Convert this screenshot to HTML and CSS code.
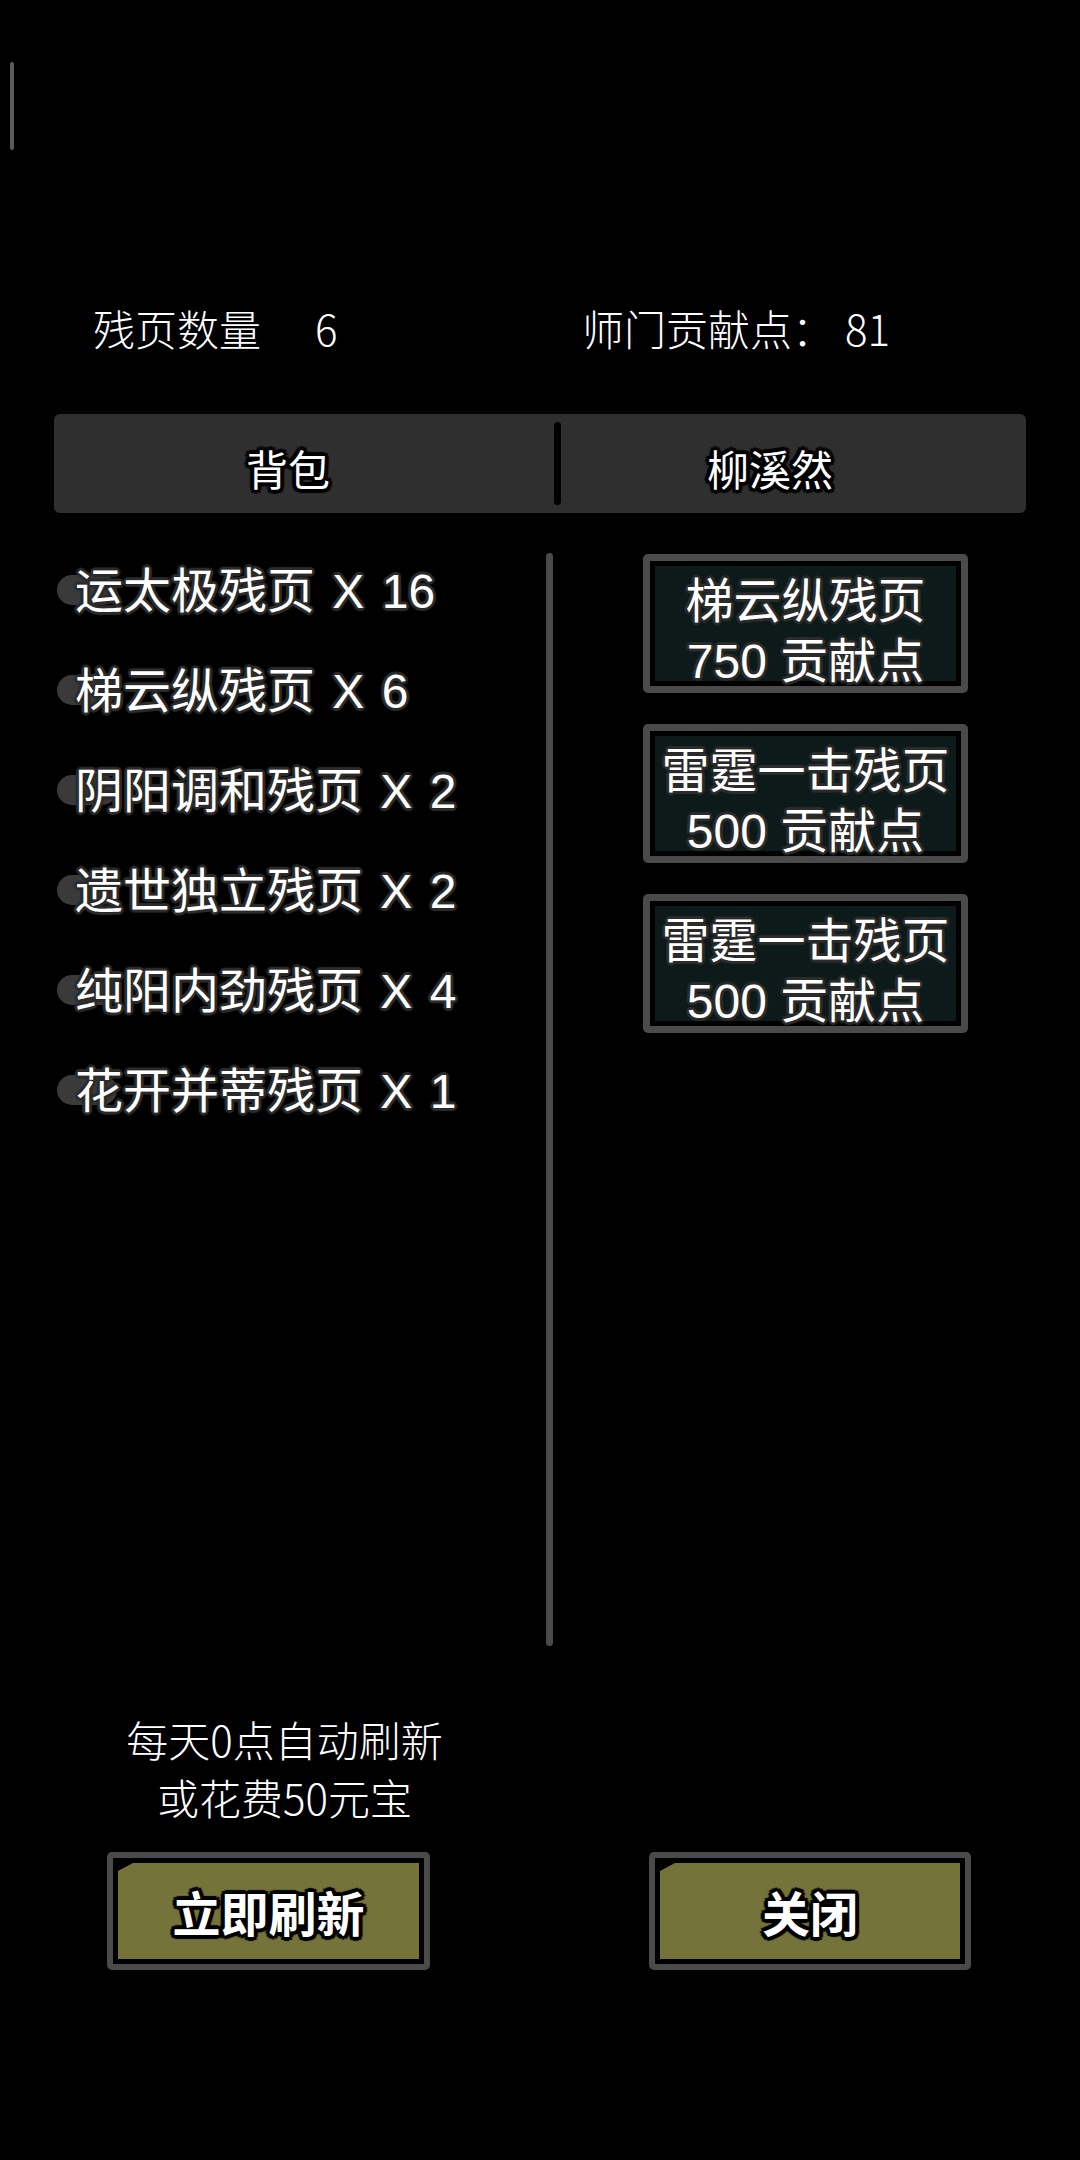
FILE: index.html
```html
<!DOCTYPE html>
<html lang="zh-CN">
<head>
<meta charset="utf-8">
<title>残页兑换</title>
<link rel="stylesheet" href="styles.css">
</head>
<body>
<div class="page">
  <div class="indicator"></div>

  <div class="stats">
    <div class="stat stat-left"><span>残页数量</span><span class="num num-left">6</span></div>
    <div class="stat stat-right"><span>师门贡献点：</span><span class="num num-right">81</span></div>
  </div>

  <div class="tabs">
    <div class="tab tab-left outlined-black">背包</div>
    <div class="tab-divider"></div>
    <div class="tab tab-right outlined-black">柳溪然</div>
  </div>

  <div class="main">
    <div class="bag-list">
      <div class="bag-row"><span class="blob"></span><span class="bag-text outlined-gray">运太极残页 X 16</span></div>
      <div class="bag-row"><span class="blob"></span><span class="bag-text outlined-gray">梯云纵残页 X 6</span></div>
      <div class="bag-row"><span class="blob"></span><span class="bag-text outlined-gray">阴阳调和残页 X 2</span></div>
      <div class="bag-row"><span class="blob"></span><span class="bag-text outlined-gray">遗世独立残页 X 2</span></div>
      <div class="bag-row"><span class="blob"></span><span class="bag-text outlined-gray">纯阳内劲残页 X 4</span></div>
      <div class="bag-row"><span class="blob"></span><span class="bag-text outlined-gray">花开并蒂残页 X 1</span></div>
    </div>
    <div class="scrollbar"></div>
    <div class="shop">
      <div class="card"><div class="card-fill outlined-gray"><div class="card-line">梯云纵残页</div><div class="card-line">750 贡献点</div></div></div>
      <div class="card"><div class="card-fill outlined-gray"><div class="card-line">雷霆一击残页</div><div class="card-line">500 贡献点</div></div></div>
      <div class="card"><div class="card-fill outlined-gray"><div class="card-line">雷霆一击残页</div><div class="card-line">500 贡献点</div></div></div>
    </div>
  </div>

  <div class="refresh-note">
    <div>每天0点自动刷新</div>
    <div>或花费50元宝</div>
  </div>

  <div class="buttons">
    <div class="btn btn-refresh"><div class="btn-fill outlined-black">立即刷新</div></div>
    <div class="btn btn-close"><div class="btn-fill outlined-black">关闭</div></div>
  </div>
</div>
</body>
</html>
```

FILE: styles.css
```css
html, body {
  margin: 0;
  padding: 0;
  background: #000;
}

body {
  width: 1080px;
  height: 2160px;
  overflow: hidden;
  color: #fff;
  font-family: "Noto Sans CJK SC", "Noto Sans", sans-serif;
}

.page {
  display: flex;
  flex-direction: column;
  width: 1080px;
}

.indicator {
  margin-top: 62px;
  margin-left: 10px;
  width: 4px;
  height: 88px;
  border-radius: 2px;
  background: #5a5a5a;
}

.outlined-gray {
  text-shadow:
    3px 0 1px #2c2c2c, -3px 0 1px #2c2c2c, 0 3px 1px #2c2c2c, 0 -3px 1px #2c2c2c,
    2px 2px 1px #2c2c2c, -2px 2px 1px #2c2c2c, 2px -2px 1px #2c2c2c, -2px -2px 1px #2c2c2c;
}

.outlined-black {
  text-shadow:
    4px 0 1px #000, -4px 0 1px #000, 0 4px 1px #000, 0 -4px 1px #000,
    3px 3px 1px #000, -3px 3px 1px #000, 3px -3px 1px #000, -3px -3px 1px #000,
    2px 0 0 #000, -2px 0 0 #000, 0 2px 0 #000, 0 -2px 0 #000;
}

/* stats */
.stats {
  display: flex;
  margin-top: 157px;
  height: 42px;
  font-size: 42px;
  line-height: 42px;
  font-weight: 300;
}

.stat {
  display: flex;
  white-space: nowrap;
}

.stat-left {
  width: 582px;
  padding-left: 93px;
  box-sizing: border-box;
}

.num-left {
  margin-left: 54px;
}

.num-right {
  margin-left: 11px;
}

/* tabs */
.tabs {
  display: flex;
  align-items: center;
  margin-top: 65px;
  margin-left: 54px;
  width: 972px;
  height: 99px;
  border-radius: 6px;
  background: #2f2f2f;
}

.tab {
  font-size: 42px;
  line-height: 99px;
  height: 99px;
  padding-top: 4px;
  box-sizing: border-box;
  text-align: center;
}

.tab-left {
  width: 468px;
}

.tab-divider {
  margin-left: 32px;
  width: 7px;
  height: 83px;
  border-radius: 4px;
  background: #000;
}

.tab-right {
  width: 418px;
}

/* main */
.main {
  display: flex;
  align-items: flex-start;
  margin-top: 24px;
  height: 1109px;
}

.bag-list {
  display: flex;
  flex-direction: column;
  width: 546px;
  padding-top: 5px;
  padding-left: 57px;
  box-sizing: border-box;
}

.bag-row {
  position: relative;
  height: 100px;
  font-family: "Liberation Sans", "Noto Sans CJK SC", sans-serif;
  font-size: 48px;
  line-height: 100px;
  word-spacing: 4px;
  white-space: nowrap;
}

.blob {
  position: absolute;
  left: 0;
  top: 33px;
  width: 60px;
  height: 30px;
  border-radius: 15px;
  background: #3a3a3a;
}

.bag-text {
  position: relative;
  padding-left: 18px;
}

.scrollbar {
  margin-top: 16px;
  width: 7px;
  height: 1093px;
  border-radius: 4px;
  background: #4a4a4a;
}

.shop {
  display: flex;
  flex-direction: column;
  gap: 31px;
  margin-top: 17px;
  margin-left: 90px;
  width: 325px;
}

.card {
  box-sizing: border-box;
  width: 325px;
  height: 139px;
  border: 7px solid #4a4a4a;
  border-radius: 5px;
  padding: 5px;
  background: #000;
}

.card-fill {
  height: 115px;
  padding-top: 6px;
  box-sizing: border-box;
  background: #0c1a1a;
  font-family: "Liberation Sans", "Noto Sans CJK SC", sans-serif;
  font-size: 48px;
  text-align: center;
  white-space: nowrap;
}

.card-line {
  height: 60px;
  line-height: 60px;
}

/* refresh note */
.refresh-note {
  margin-top: 64px;
  width: 569px;
  font-size: 42px;
  line-height: 58px;
  text-align: center;
  font-weight: 300;
}

/* buttons */
.buttons {
  display: flex;
  margin-top: 26px;
  padding-left: 107px;
  gap: 219px;
}

.btn {
  box-sizing: border-box;
  width: 323px;
  height: 118px;
  border: 6px solid #4a4a4a;
  border-radius: 5px;
  padding: 5px;
  background: #000;
}

.btn-close {
  width: 322px;
}

.btn-fill {
  height: 96px;
  background: #74743a;
  clip-path: polygon(15px 0, 100% 0, 100% 100%, 0 100%, 0 8px);
  font-size: 48px;
  font-weight: 700;
  line-height: 96px;
  text-align: center;
}
```
